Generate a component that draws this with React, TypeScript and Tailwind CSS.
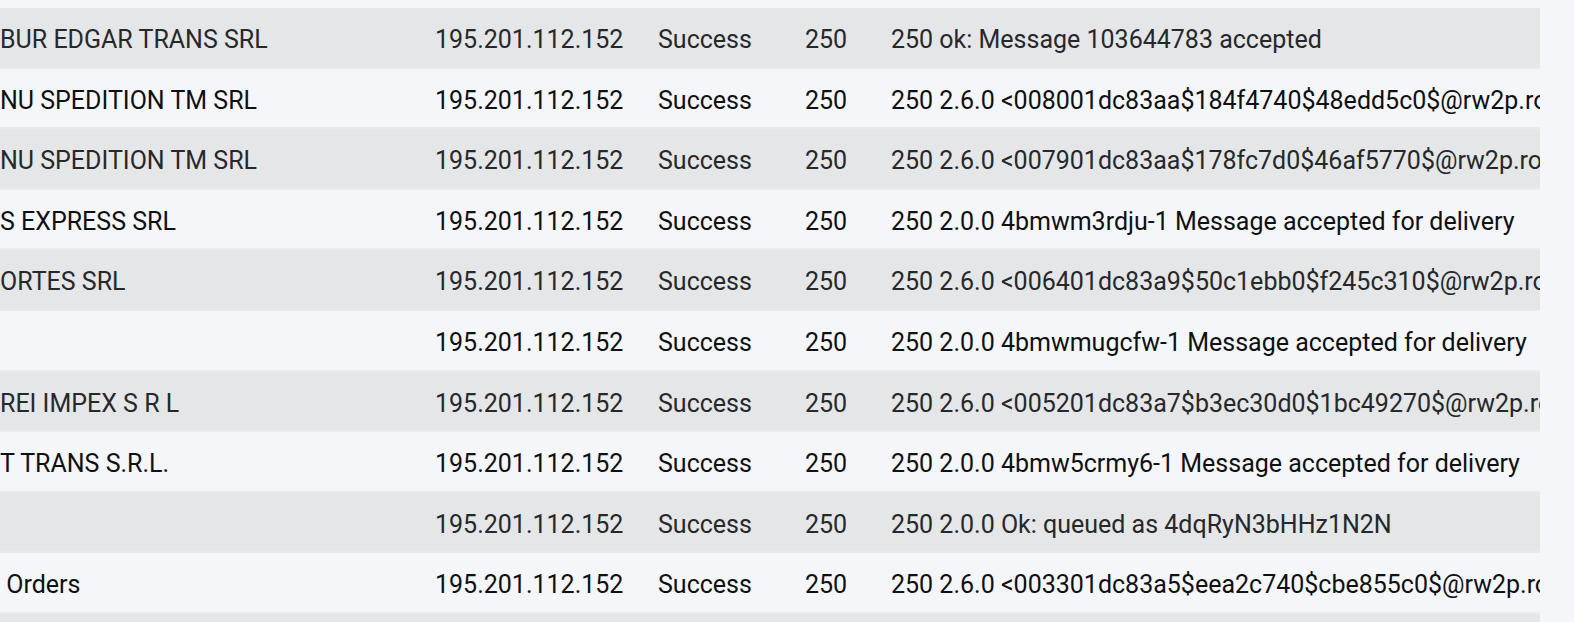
type LogRow = {
  name: string;
  ip: string;
  status: string;
  code: string;
  message: string;
};

const rows: LogRow[] = [
  { name: "BUR EDGAR TRANS SRL", ip: "195.201.112.152", status: "Success", code: "250", message: "250 ok: Message 103644783 accepted" },
  { name: "NU SPEDITION TM SRL", ip: "195.201.112.152", status: "Success", code: "250", message: "250 2.6.0 <008001dc83aa$184f4740$48edd5c0$@rw2p.ro>" },
  { name: "NU SPEDITION TM SRL", ip: "195.201.112.152", status: "Success", code: "250", message: "250 2.6.0 <007901dc83aa$178fc7d0$46af5770$@rw2p.ro>" },
  { name: "S EXPRESS SRL", ip: "195.201.112.152", status: "Success", code: "250", message: "250 2.0.0 4bmwm3rdju-1 Message accepted for delivery" },
  { name: "ORTES SRL", ip: "195.201.112.152", status: "Success", code: "250", message: "250 2.6.0 <006401dc83a9$50c1ebb0$f245c310$@rw2p.ro>" },
  { name: "", ip: "195.201.112.152", status: "Success", code: "250", message: "250 2.0.0 4bmwmugcfw-1 Message accepted for delivery" },
  { name: "REI IMPEX S R L", ip: "195.201.112.152", status: "Success", code: "250", message: "250 2.6.0 <005201dc83a7$b3ec30d0$1bc49270$@rw2p.ro>" },
  { name: "T TRANS S.R.L.", ip: "195.201.112.152", status: "Success", code: "250", message: "250 2.0.0 4bmw5crmy6-1 Message accepted for delivery" },
  { name: "", ip: "195.201.112.152", status: "Success", code: "250", message: "250 2.0.0 Ok: queued as 4dqRyN3bHHz1N2N" },
  { name: " Orders", ip: "195.201.112.152", status: "Success", code: "250", message: "250 2.6.0 <003301dc83a5$eea2c740$cbe855c0$@rw2p.ro>" },
];

export default function App() {
  return (
    <div
      className="w-full h-[622px] bg-[#f5f6fa] overflow-hidden pt-[8px]"
      style={{ fontFamily: "Roboto, 'Noto Sans', sans-serif" }}
    >
      <div className="w-[1540px] overflow-hidden">
        {rows.map((row, i) => {
          const odd = i % 2 === 0;
          return (
            <div
              key={i}
              className={
                odd
                  ? "grid grid-cols-[435px_223px_147px_86px_1fr] items-center h-[60.6px] pt-[5px] bg-[#e5e6e8] border-b-2 border-[#eaebee] text-[25px] text-[#26282b]"
                  : "grid grid-cols-[435px_223px_147px_86px_1fr] items-center h-[60.6px] pt-[5px] bg-[#f5f6fa] border-b-2 border-[#eaebee] text-[25px] text-[#0f1012]"
              }
            >
              <div className="whitespace-pre overflow-hidden">{row.name}</div>
              <div className="whitespace-nowrap">{row.ip}</div>
              <div className="whitespace-nowrap">{row.status}</div>
              <div className="whitespace-nowrap">{row.code}</div>
              <div className="whitespace-nowrap overflow-hidden">{row.message}</div>
            </div>
          );
        })}
        <div className="h-[20px] bg-[#e5e6e8]" />
      </div>
    </div>
  );
}
